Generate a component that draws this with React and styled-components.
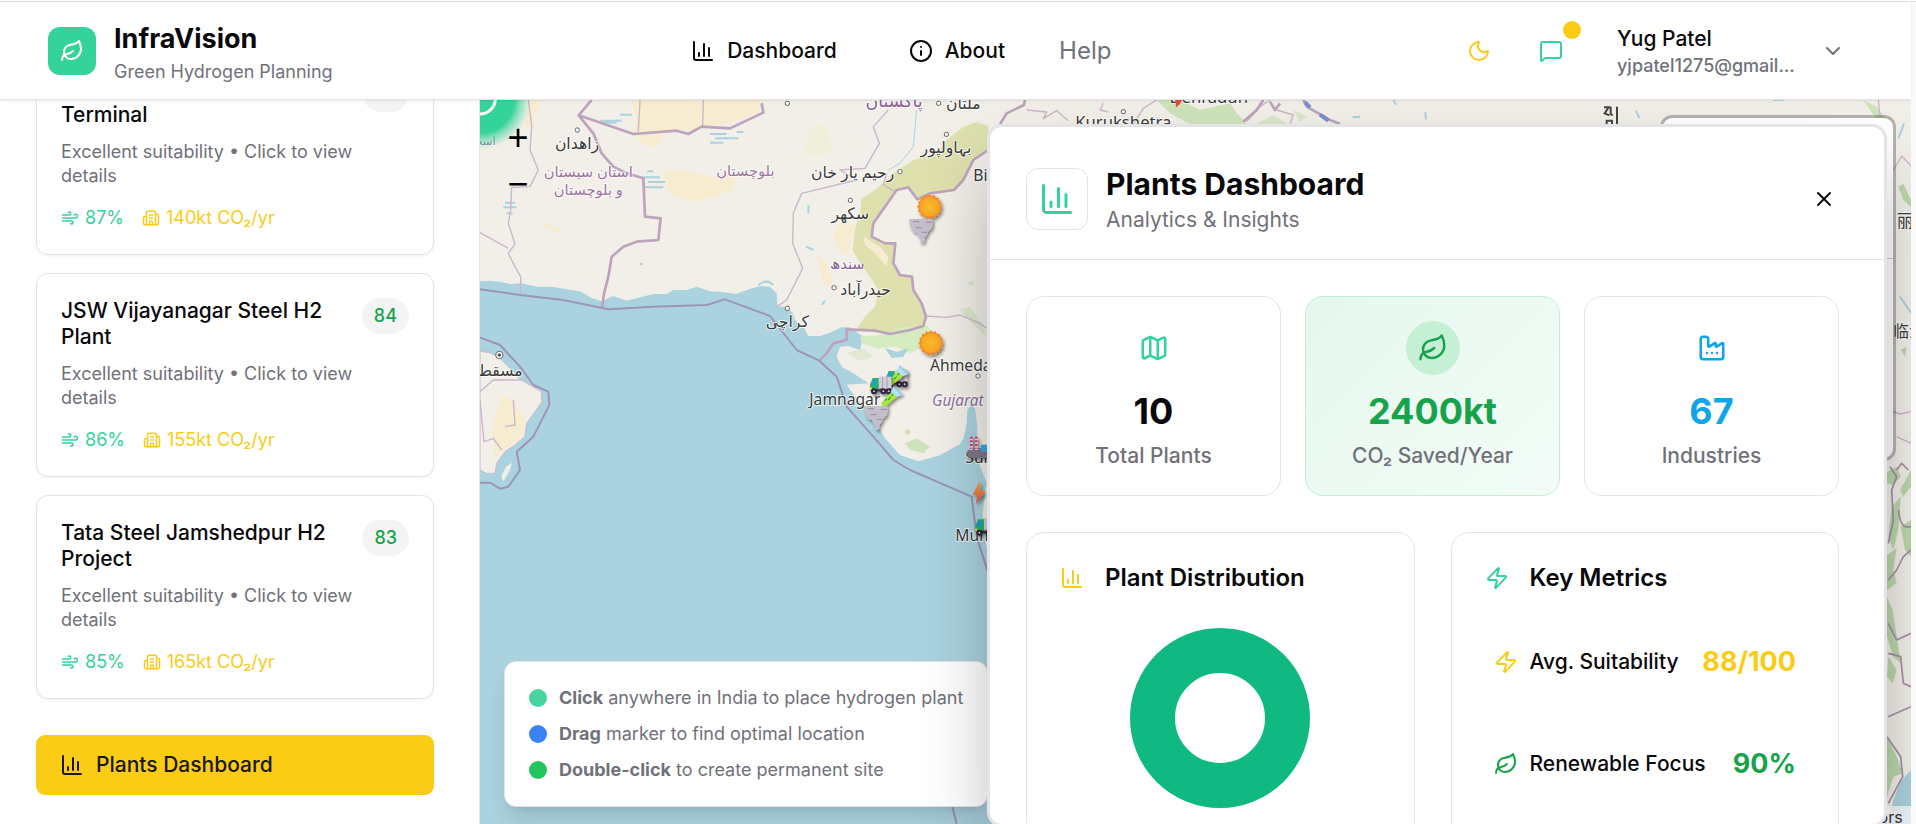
import React from "react";
import styled, { createGlobalStyle, css } from "styled-components";
import {
  Leaf,
  ChartColumn,
  Info,
  Moon,
  MessageSquare,
  ChevronDown,
  Wind,
  Building2,
  X,
  Map as MapIcon,
  Factory,
  Zap,
} from "lucide-react";

const c = {
  text: "#09090b",
  muted: "#71717a",
  border: "#e4e4e7",
  mint: "#34d399",
  yellow: "#facc15",
  green: "#16a34a",
  sky: "#0ea5e9",
};

const GlobalStyle = createGlobalStyle`
  *, *::before, *::after { box-sizing: border-box; }
  body {
    margin: 0;
    background: #fff;
    color: ${c.text};
    font-family: Inter, "Liberation Sans", sans-serif;
    font-size: 18px;
    line-height: 24px;
  }
  button { font: inherit; color: inherit; border: 0; background: none; padding: 0; cursor: pointer; }
  h1, h2, h3, p, ul, dl, dd, dt { margin: 0; padding: 0; font-weight: inherit; font-size: inherit; }
  ul { list-style: none; }
  svg { flex: none; display: block; }
`;

/* Page frame */

const Shell = styled.div`
  display: flex;
  flex-direction: column;
  height: 100vh;
  overflow: hidden;
`;

const TopRule = styled.div`
  flex: none;
  height: 2px;
  border-bottom: 1px solid #dedfe0;
`;

const Frame = styled.div`
  flex: 1;
  min-height: 0;
  display: flex;
`;

const Page = styled.div`
  flex: 1;
  min-width: 0;
  display: flex;
  flex-direction: column;
`;

const ScrollTrack = styled.div`
  flex: none;
  width: 5px;
  background: #fafafa;
`;

const Workspace = styled.div`
  flex: 1;
  min-height: 0;
  display: flex;
`;

/* Header */

const Header = styled.header`
  position: relative;
  z-index: 2;
  flex: none;
  display: flex;
  align-items: center;
  justify-content: space-between;
  height: 98px;
  padding: 0 48px;
  background: #fff;
  border-bottom: 1px solid ${c.border};
  box-shadow: 0 1px 3px rgba(0, 0, 0, 0.08);
`;

const Brand = styled.div`
  display: flex;
  align-items: center;
  gap: 18px;
`;

const Logo = styled.span`
  display: grid;
  place-items: center;
  width: 48px;
  height: 48px;
  border-radius: 12px;
  background: ${c.mint};
  color: #fff;
`;

const BrandName = styled.h1`
  font-size: 27px;
  line-height: 42px;
  font-weight: 700;
`;

const Caption = styled.p`
  color: ${c.muted};
`;

const Nav = styled.nav`
  display: flex;
  align-items: center;
  gap: 36px;
`;

const NavButton = styled.button`
  display: flex;
  align-items: center;
  gap: 12px;
  height: 54px;
  padding: 0 18px;
  font-size: 21px;
  font-weight: 500;
`;

const HelpLink = styled.a`
  color: ${c.muted};
  font-size: 24px;
  text-decoration: none;
`;

const Account = styled.div`
  display: flex;
  align-items: center;
  gap: 18px;
`;

const IconButton = styled.button`
  position: relative;
  display: grid;
  place-items: center;
  width: ${(p) => p.$size || 54}px;
  height: ${(p) => p.$size || 54}px;
  color: ${(p) => p.$color || c.text};
`;

const Badge = styled.span`
  position: absolute;
  top: -3px;
  right: -3px;
  width: 18px;
  height: 18px;
  border-radius: 50%;
  background: ${c.yellow};
`;

const UserButton = styled.button`
  display: flex;
  align-items: center;
  gap: 24px;
  padding: 0 18px 0 21px;
  text-align: left;
`;

const UserText = styled.span`
  display: flex;
  flex-direction: column;
  width: 180px;
`;

const UserName = styled.span`
  font-size: 21px;
  line-height: 30px;
  font-weight: 500;
`;

const UserMail = styled.span`
  color: ${c.muted};
  font-weight: 500;
  overflow: hidden;
  white-space: nowrap;
`;

/* Sidebar */

const Sidebar = styled.aside`
  flex: none;
  display: flex;
  flex-direction: column;
  justify-content: flex-end;
  width: 480px;
  padding: 0 45px 29px 36px;
  overflow: hidden;
  background: #fff;
  border-right: 1px solid ${c.border};
`;

const PlantList = styled.ul`
  display: flex;
  flex-direction: column;
  gap: 18px;
  margin-bottom: 36px;
`;

const PlantCard = styled.li`
  padding: 24px;
  border: 1px solid ${c.border};
  border-radius: 12px;
  background: #fff;
  box-shadow: 0 1px 3px rgba(0, 0, 0, 0.06);
`;

const PlantHead = styled.div`
  display: flex;
  align-items: flex-start;
  justify-content: space-between;
  gap: 12px;
`;

const PlantName = styled.h3`
  font-size: 21px;
  line-height: 26px;
  font-weight: 500;
`;

const Score = styled.span`
  flex: none;
  padding: 6px 12px;
  border-radius: 18px;
  background: #f4f4f5;
  color: ${c.green};
  font-weight: 500;
`;

const PlantNote = styled.p`
  margin: 12px 0 18px;
  color: ${c.muted};
`;

const PlantStats = styled.div`
  display: flex;
  gap: 18px;
`;

const PlantStat = styled.span`
  display: flex;
  align-items: center;
  gap: 6px;
  color: ${(p) => p.$color};
`;

const DashboardButton = styled.button`
  flex: none;
  display: flex;
  align-items: center;
  gap: 12px;
  height: 60px;
  padding: 0 24px;
  border-radius: 9px;
  background: ${c.yellow};
  color: #18181b;
  font-size: 21px;
  font-weight: 500;
`;

/* Map */

const MapArea = styled.main`
  position: relative;
  flex: 1;
  min-width: 0;
  overflow: hidden;
  background: #aad3df;
`;

const MapCanvas = styled.svg`
  position: absolute;
  inset: 0;
  width: 100%;
  height: 100%;
`;

const ZoomControls = styled.div`
  position: absolute;
  top: 15px;
  left: 15px;
  display: flex;
  flex-direction: column;
`;

const ZoomButton = styled.button`
  display: grid;
  place-items: center;
  width: 46px;
  height: 46px;
  font-size: 36px;
  line-height: 46px;
  color: #000;
  font-family: "Liberation Sans", Arial, sans-serif;
`;

const Legend = styled.ul`
  position: absolute;
  left: 24px;
  bottom: 17px;
  display: flex;
  flex-direction: column;
  gap: 12px;
  padding: 24px;
  border: 1px solid ${c.border};
  border-radius: 12px;
  background: #fff;
  color: ${c.muted};
  box-shadow: 0 15px 22px -4px rgba(0, 0, 0, 0.12), 0 6px 9px -6px rgba(0, 0, 0, 0.1);
`;

const LegendItem = styled.li`
  display: flex;
  align-items: center;
  gap: 12px;
  white-space: nowrap;

  &::before {
    content: "";
    width: 18px;
    height: 18px;
    border-radius: 50%;
    background: ${(p) => p.$color};
  }
`;

const LayersBox = styled.div`
  position: absolute;
  top: 15px;
  right: 15px;
  width: 236px;
  height: 346px;
  padding-top: 140px;
  border: 3px solid rgba(0, 0, 0, 0.25);
  border-radius: 12px;
  background: #fff;
  background-clip: padding-box;

  &::before {
    content: "";
    display: block;
    border-top: 1px solid #ccc;
  }
`;

/* Dashboard panel */

const Panel = styled.section`
  position: absolute;
  top: 24px;
  right: 24px;
  bottom: -3px;
  width: 900px;
  display: flex;
  flex-direction: column;
  overflow: hidden;
  border: 3px solid ${c.border};
  border-radius: 15px;
  background: #fff;
  box-shadow: 0 38px 75px -12px rgba(0, 0, 0, 0.35);
`;

const PanelHeader = styled.div`
  flex: none;
  display: flex;
  align-items: center;
  gap: 18px;
  padding: 36px 36px 24px;
  border-bottom: 1px solid ${c.border};
`;

const PanelIcon = styled.span`
  display: grid;
  place-items: center;
  width: 62px;
  height: 62px;
  border: 1px solid ${c.border};
  border-radius: 12px;
  color: ${c.mint};
`;

const PanelHeading = styled.div`
  flex: 1;
`;

const PanelTitle = styled.h2`
  font-size: 30px;
  line-height: 42px;
  font-weight: 700;
`;

const PanelSubtitle = styled.p`
  color: ${c.muted};
  font-size: 21px;
  line-height: 30px;
`;

const PanelBody = styled.div`
  display: flex;
  flex-direction: column;
  gap: 36px;
  padding: 36px 45px 36px 36px;
`;

const StatGrid = styled.div`
  display: grid;
  grid-template-columns: repeat(3, 1fr);
  gap: 24px;
`;

const StatCard = styled.div`
  display: flex;
  flex-direction: column;
  align-items: center;
  padding: 24px;
  border: 1px solid ${c.border};
  border-radius: 18px;

  ${(p) =>
    p.$highlight &&
    css`
      border-color: #c1efd1;
      background: linear-gradient(135deg, #e5f8ed, #f3fcf8);
    `}
`;

const StatIcon = styled.span`
  display: grid;
  place-items: center;
  width: 54px;
  height: 54px;
  margin-bottom: 12px;
  border-radius: 50%;
  color: ${(p) => p.$color};
  background: ${(p) => (p.$filled ? "#c5f0d6" : "transparent")};
`;

const StatValue = styled.strong`
  color: ${(p) => p.$color};
  font-size: 36px;
  line-height: 48px;
  font-weight: 700;
`;

const StatLabel = styled.span`
  margin-top: 6px;
  color: ${c.muted};
  font-size: 21px;
  line-height: 30px;
  font-weight: 500;
`;

const DetailGrid = styled.div`
  display: grid;
  grid-template-columns: repeat(2, 1fr);
  gap: 36px;
`;

const DetailCard = styled.div`
  padding: 24px;
  border: 1px solid ${c.border};
  border-radius: 18px;
`;

const DetailHead = styled.div`
  display: flex;
  align-items: center;
  gap: 12px;
  margin-bottom: 24px;
`;

const DetailIcon = styled.span`
  display: grid;
  place-items: center;
  width: 42px;
  height: 42px;
  color: ${(p) => p.$color};
`;

const DetailTitle = styled.h3`
  font-size: 24px;
  line-height: 36px;
  font-weight: 600;
`;

const Donut = styled.svg`
  width: 190px;
  height: 190px;
  margin: 0 auto;
`;

const Metrics = styled.dl`
  display: flex;
  flex-direction: column;
  gap: 24px;
`;

const Metric = styled.div`
  display: flex;
  align-items: center;
  gap: 12px;
  height: 78px;
  padding: 0 18px;
  color: ${(p) => p.$color};
`;

const MetricLabel = styled.dt`
  flex: 1;
  color: ${c.text};
  font-size: 21px;
  font-weight: 500;
  white-space: nowrap;
`;

const MetricValue = styled.dd`
  font-size: 27px;
  line-height: 36px;
  font-weight: 700;
`;

/* Map drawing: all coordinates are thirds of a pixel */

const Label = styled.text`
  font-family: "Noto Sans", "DejaVu Sans", "Noto Sans CJK SC", sans-serif;
  font-size: ${(p) => p.$size || 47}px;
  font-style: ${(p) => (p.$italic ? "italic" : "normal")};
  text-anchor: ${(p) => p.$anchor || "middle"};
  fill: ${(p) => p.$fill || "#3a3a3a"};
  stroke: #fff;
  stroke-opacity: 0.75;
  stroke-width: 6px;
  stroke-linejoin: round;
  paint-order: stroke;
`;

const Sun = ({ x, y }) => (
  <g transform={`translate(${x} ${y})`} filter="url(#drop)">
    {[0, 22, 45, 67].map((a) => (
      <rect key={a} x="-27" y="-27" width="54" height="54" fill="#f98a2b" transform={`rotate(${a})`} />
    ))}
    <circle r="30" fill="url(#sun)" />
  </g>
);

const Tornado = ({ x, y }) => (
  <g transform={`translate(${x} ${y})`} filter="url(#drop)">
    <path
      d="M-36 -34L34 -34L36 -24L34 -16L32 -6L26 0L20 4L18 14L12 20L10 26L10 34L4 38L-4 36L0 30L-6 20L-12 8L-24 4L-30 -6L-34 -18Z"
      fill="#c3becb"
    />
    <path d="M-24 -26H-6M14 -24H34M-16 -8H2M2 6H18" stroke="#958f9f" strokeWidth="3" />
  </g>
);

const Truck = ({ x, y }) => (
  <g transform={`translate(${x} ${y})`} filter="url(#drop)">
    <rect x="-6" y="-26" width="38" height="38" fill="#d3cfda" />
    <path d="M6 -26V12M19 -26V12" stroke="#a9a3b3" strokeWidth="3" />
    <path d="M-32 -2L-24 -22H-6V16H-32Z" fill="#27b36d" />
    <path d="M-28 -2L-22 -16H-14V-2Z" fill="#2b93e6" />
    <path d="M-32 6H-26V14H-32Z" fill="#ffcf3f" />
    <path d="M-18 12H32V18H-18Z" fill="#2c2140" />
    <path d="M-4 12H4M26 12H32" stroke="#e0356f" strokeWidth="6" />
    {[-20, 8, 24].map((cx) => (
      <g key={cx}>
        <circle cx={cx} cy="18" r="9" fill="#2c2140" />
        <circle cx={cx} cy="18" r="3" fill="#cfc8dc" />
      </g>
    ))}
  </g>
);

const Tube = ({ x, y }) => (
  <g transform={`translate(${x} ${y})`} filter="url(#drop)">
    <path d="M8 -24L24 -8L-12 22Q-26 28 -28 14Z" fill="#a6e83a" />
    <path d="M0 -18L8 -34L34 -10L18 -4Z" fill="#b3e2f7" />
    <path d="M8 -34L34 -10" stroke="#8ccbe9" strokeWidth="5" />
    <path d="M-18 8L-12 2M-8 6L0 -2M2 -6L8 -12" stroke="#3fa34a" strokeWidth="4" />
  </g>
);

function MapDrawing() {
  return (
    <MapCanvas viewBox="0 30 4293 2172" preserveAspectRatio="xMinYMin slice" aria-label="Map of plant sites">
      <defs>
        <radialGradient id="sun">
          <stop offset="0" stopColor="#fbbd2c" />
          <stop offset="1" stopColor="#f5a623" />
        </radialGradient>
        <radialGradient id="glow">
          <stop offset="0" stopColor="#34d399" />
          <stop offset="0.68" stopColor="#34d399" />
          <stop offset="0.8" stopColor="#34d399" stopOpacity="0.55" />
          <stop offset="1" stopColor="#34d399" stopOpacity="0" />
        </radialGradient>
        <linearGradient id="bolt" x2="0" y2="1">
          <stop offset="0" stopColor="#fbab3a" />
          <stop offset="1" stopColor="#f0503c" />
        </linearGradient>
        <filter id="drop" x="-40%" y="-40%" width="190%" height="190%">
          <feDropShadow dx="5" dy="7" stdDeviation="5" floodOpacity="0.45" />
        </filter>
      </defs>

      {/* land */}
      <path
        fill="#f2efe9"
        d="M0 0H4293V2202H1560V1500L1520 1380L1508 1270L1520 1180L1490 1100L1492 1010L1486 960L1478 940L1462 960L1460 1000L1452 1040L1440 1062L1380 1096L1315 1114L1260 1095L1215 1045L1180 985L1140 935L1112 902L1100 884L1165 880L1120 850L1085 830L1070 800L1080 770L1105 768L1140 780L1150 740L1110 712L1085 712L1050 728L1020 738L985 738L970 710L945 690L938 668L912 650L892 648L890 610L870 590L840 588L800 600L770 612L720 605L690 604L650 590L620 600L580 600L560 612L520 612L480 622L440 632L400 618L385 625L365 634L330 622L300 604L260 598L215 590L170 590L125 580L90 582L60 575L30 572L0 574Z"
      />
      <path
        fill="#f2efe9"
        stroke="#c8b8cc"
        strokeWidth="3"
        d="M0 784L30 788L60 805L90 835L120 868L150 885L184 905L186 935L165 965L140 1000L134 1040L105 1065L75 1085L50 1120L45 1150L20 1150L0 1140Z"
      />
      <path fill="#f2efe9" d="M64 1160L78 1130L96 1118L90 1140L70 1175Z" />

      {/* desert and scrub */}
      <g fill="#f7ecd0">
        <path d="M145 30H185L165 80L158 110H130Z" />
        <path d="M455 30H850L835 70L740 100L640 118L570 120L545 135L535 170L490 165L460 130L470 90Z" />
        <path d="M550 240L620 240L690 262L770 245L760 300L700 320L640 336L590 320L560 300Z" />
        <path d="M1058 440L1070 410L1105 395L1125 410L1115 450L1105 500L1080 485Z" />
        <path d="M1012 495L1035 515L1058 570L1048 590L1030 575Z" />
        <path d="M184 395L245 418L240 428L195 412Z" />
        <path d="M70 915L100 935L135 985L130 1030L100 1060L62 1090L42 1110L38 1000Z" />
      </g>
      <path fill="#eff0da" d="M985 130L1015 100L1045 118L1055 180L1030 200L970 192Z" />
      <path
        fill="#dee0ae"
        d="M1525 180L1480 210L1450 270L1422 300L1350 310L1312 328L1285 292L1250 300L1215 350L1180 400L1175 440L1215 460L1246 460L1240 520L1260 555L1296 560L1300 600L1325 640L1338 680L1330 708L1290 720L1230 732L1185 722L1130 715L1155 680L1185 650L1195 600L1170 560L1140 520L1118 480L1125 420L1140 370L1145 325L1185 300L1240 250L1300 210L1370 190L1400 150L1450 110L1490 96L1525 108Z"
      />
      <path fill="#f7ecd0" d="M1150 440L1200 470L1225 500L1220 530L1185 490L1155 465Z" />
      <path fill="#d5ecc0" d="M1140 740L1200 735L1270 712L1340 706L1358 730L1330 770L1290 790L1250 770L1190 775L1145 760Z" />
      <path fill="#aad3df" d="M1215 775L1250 785L1285 775L1270 800L1235 804Z" />
      <g fill="#cfe3bb">
        <path d="M1275 1060L1310 1045L1350 1070L1330 1090L1290 1080Z" />
        <circle cx="1283" cy="1026" r="8" />
        <path d="M1100 790L1150 775L1180 800L1140 812Z" opacity="0.5" />
        <path d="M1460 580L1480 570L1482 590ZM1440 660L1470 650L1500 690L1520 740L1485 710Z" opacity="0.6" />
        <path d="M2030 30L2070 70L2130 102H2300L2270 70L2250 40L2160 60L2100 30Z" />
        <path d="M2330 102L2380 75L2420 102ZM2440 60L2480 80L2460 95Z" opacity="0.7" />
        <path d="M4150 30L4190 90L4230 102L4190 50Z" />
      </g>

      {/* inland water */}
      <g stroke="#aad3df" strokeWidth="6" fill="none">
        <path d="M360 92H425M370 98H410M420 74H455M690 132H740M705 145H775M690 158H730M770 126H790M490 262H540M505 276H555M495 292H550M75 338H105M70 352H110M80 370H98M502 244H520" />
        <path d="M985 345V370M978 470L1000 480M1025 645L1035 632M480 522H488" />
        <path d="M1310 60L1300 170L1260 220L1225 240" strokeWidth="3" />
        <path d="M835 585Q860 565 880 585" />
        <path d="M2740 30L2748 44M2836 66L2838 88M2618 82L2640 80M4272 100L4255 145M3468 62L3478 84M3880 30H3910M4260 620L4293 668" />
      </g>

      {/* borders */}
      <g fill="none" stroke="#cbb5cb" strokeWidth="4" strokeLinejoin="round">
        <path d="M145 30L155 110L150 180L175 240L150 290L95 292L92 360L85 400L105 462L85 490L105 530L122 560V612" />
        <path d="M0 428L40 450L85 475" />
        <path d="M480 30L475 125M670 30L668 110" />
        <path d="M1225 60L1180 110L1198 160L1155 235L1080 240L1130 270L965 310L940 370L938 460L968 535L920 630L888 652" />
        <path d="M1220 250L1210 285L1245 305M1338 678L1400 682L1440 675L1500 700L1520 715" />
        <path d="M0 905L40 870L125 870M0 930L12 1055L40 1045L65 1080M75 1010L105 1005L100 930" />
        <path d="M1640 60L1700 66L1690 86L1730 62L1765 92M1870 40L1860 60L1885 66M1960 102L1990 55L2030 30M2300 95L2340 50L2370 30M2390 60L2440 75L2430 102" />
        <path d="M4195 30L4200 80M4240 240L4265 198L4293 228M4222 960L4260 972L4293 965M4250 1040L4293 1060" />
      </g>
      <g fill="none" stroke="#bda3bb" strokeWidth="8" strokeLinejoin="round">
        <path d="M335 30L296 76L340 130L365 190L400 230L440 250L490 265L495 380L542 385L535 450L470 455L430 470L395 500L385 560L372 610L366 655" />
        <path d="M296 76L460 132L590 122L625 132L665 110L750 115L850 68L845 40" />
        <path d="M1525 180L1480 210L1450 270L1422 300L1350 310L1312 328L1285 292L1250 300L1215 350L1180 400L1175 440L1215 460L1246 460L1240 520L1260 555L1296 560L1300 600L1325 640L1338 680L1330 708L1290 720L1230 732L1185 722L1100 718V750L1060 760L1040 790L1018 812" />
        <path d="M1560 102L1580 70L1632 45L1635 30M2290 95L2330 60L2350 30M2370 35L2385 60L2400 40M2470 30L2480 50L2550 90L2580 102" />
      </g>
      <g fill="none" stroke="#9d94b8" strokeWidth="6" strokeLinejoin="round">
        <path d="M0 598L120 615L250 630L385 658L520 650L680 645L735 628L870 678L950 780L1018 812L1070 860L1100 950L1180 1040L1240 1110L1290 1140L1475 1220L1490 1340L1525 1450" />
        <path d="M0 742L60 765L120 830L160 885L205 905L208 945L160 1040L110 1085L120 1140L85 1190L60 1196L30 1178L0 1178" />
        <path d="M1412 2130L1430 2202" />
      </g>
      <path d="M2475 36L2490 52M2520 74L2545 92" stroke="#7a8fd0" strokeWidth="12" />

      {/* eastern edge: forest and gulf */}
      <g fill="#bcd8ac">
        <path d="M4255 290L4270 282L4293 330V350L4270 330Z" />
        <path d="M4262 780L4280 770L4275 800Z" />
        <path d="M4221 1145L4250 1130L4262 1160L4240 1185L4221 1180ZM4260 1200L4293 1140V1190L4270 1220ZM4235 1250L4262 1220L4255 1320L4240 1380L4225 1340ZM4262 1310L4293 1290V1370L4270 1350Z" />
        <path d="M4221 1395L4250 1375L4240 1440L4250 1480L4221 1500ZM4262 1310L4293 1330V1400L4275 1380Z" />
        <path d="M4221 1520L4238 1560L4262 1720L4240 1700L4221 1640Z" />
        <path d="M4225 1700L4250 1740L4238 1780L4221 1760ZM4221 1940L4250 2000L4268 2050L4240 2060L4221 2120Z" />
      </g>
      <path fill="#aad3df" d="M4293 2040L4262 2075L4240 2130L4225 2202H4293Z" />
      <g fill="none" stroke="#a58fa8" strokeWidth="5" strokeLinejoin="round">
        <path d="M4230 1130L4250 1160L4235 1200L4240 1290L4225 1360M4250 1140L4265 1120L4285 1140" />
        <path d="M4256 1260Q4260 1320 4293 1310M4225 1470L4250 1440L4270 1400L4293 1380" />
        <path d="M4225 1600L4250 1650L4293 1630M4225 1690L4262 1700L4270 1780L4293 1790M4225 1880L4293 1850" />
        <path d="M4221 1940L4262 2000L4268 2060L4225 2140" />
      </g>

      {/* towns */}
      <g fill="#fff" stroke="#666" strokeWidth="3">
        <rect x="286" y="114" width="12" height="12" rx="4" />
        <rect x="916" y="34" width="12" height="12" rx="4" />
        <rect x="1370" y="34" width="12" height="12" rx="4" />
        <rect x="1393" y="127" width="12" height="12" rx="4" />
        <rect x="1254" y="239" width="12" height="12" rx="4" />
        <rect x="1105" y="325" width="12" height="12" rx="4" />
        <rect x="1056" y="587" width="12" height="12" rx="4" />
        <rect x="916" y="649" width="12" height="12" rx="4" />
        <rect x="1488" y="852" width="12" height="12" rx="4" />
        <rect x="1924" y="59" width="12" height="12" rx="4" />
        <circle cx="58" cy="795" r="11" />
        <circle cx="58" cy="795" r="4" fill="#444" />
      </g>
      <Label x="291" y="178">زاهدان</Label>
      <Label x="325" y="260" $fill="#9c74a0" $size={44}>استان سیستان</Label>
      <Label x="325" y="314" $fill="#9c74a0" $size={44}>و بلوچستان</Label>
      <Label x="796" y="258" $fill="#9c74a0" $size={44}>بلوچستان</Label>
      <Label x="1242" y="52" $fill="#8d5f96" $size={52}>پاکستان</Label>
      <Label x="1450" y="56">ملتان</Label>
      <Label x="1398" y="190">بہاولپور</Label>
      <Label x="1118" y="264">رحیم یار خان</Label>
      <Label x="1111" y="386">سکھر</Label>
      <Label x="1102" y="536" $fill="#8d5f96" $size={44}>سندھ</Label>
      <Label x="1157" y="614">حیدرآباد</Label>
      <Label x="922" y="710">کراچی</Label>
      <Label x="60" y="858">مسقط</Label>
      <Label x="10" y="166" $fill="#9c74a0" $size={36}>است</Label>
      <Label x="1480" y="274" $anchor="start">Bi</Label>
      <Label x="1350" y="842" $anchor="start">Ahmedabad</Label>
      <Label x="988" y="944" $anchor="start">Jamnagar</Label>
      <Label x="1356" y="948" $anchor="start" $italic $fill="#8f7098" $size={46}>Gujarat</Label>
      <Label x="1456" y="1118" $anchor="start">Surat</Label>
      <Label x="1426" y="1353" $anchor="start">Mumbai</Label>
      <Label x="1930" y="114" $size={50}>Kurukshetra</Label>
      <Label x="2186" y="40" $size={50}>Dehradun</Label>
      <Label x="4250" y="410" $anchor="start" $size={50}>丽江</Label>
      <Label x="4240" y="742" $anchor="start">临沧</Label>
      <g fill="none" stroke="#444" strokeWidth="6">
        <path d="M3372 52H3386L3374 70L3388 76M3392 50V72L3398 76M3411 50V102M3380 102V92H3396V102" />
      </g>
      <path d="M2086 30H2106L2100 42L2088 52Z" fill="#ea4a3c" />

      {/* markers */}
      <Sun x={1349} y={350} />
      <Tornado x={1323} y={421} />
      <Sun x={1353} y={759} />
      <Truck x={1250} y={865} />
      <Tube x={1250} y={862} />
      <Truck x={1202} y={886} />
      <Tube x={1232} y={924} />
      <Tornado x={1188} y={982} />
      <g filter="url(#drop)">
        <path d="M1460 1084L1475 1074H1540V1104H1464Z" fill="#7d7788" />
        <path d="M1470 1040H1478V1080H1470ZM1485 1040H1494V1080H1485Z" fill="#e2dce8" />
        <path d="M1474 1040V1076M1489 1040V1076" stroke="#e0356f" strokeWidth="8" strokeDasharray="6 5" />
        <rect x="1503" y="1064" width="30" height="22" fill="#38a5e8" />
      </g>
      <path d="M1500 1172L1478 1214H1492L1488 1242L1516 1204H1502Z" fill="url(#bolt)" filter="url(#drop)" />
      <Truck x={1518} y={1310} />

      {/* sidebar toggle */}
      <circle cx="0" cy="26" r="152" fill="url(#glow)" />
      <circle cx="0" cy="26" r="46" fill="none" stroke="#fff" strokeWidth="9" />

      {/* attribution */}
      <rect x="3600" y="2148" width="693" height="54" fill="#fff" fillOpacity="0.8" />
      <text x="4268" y="2200" fontSize="48" fill="#333" textAnchor="end" fontFamily="Inter, sans-serif">
        contributors
      </text>
    </MapCanvas>
  );
}

const plants = [
  { name: "Mundra Port Green H2 Terminal", score: 85, wind: "87%", co2: "140kt CO₂/yr" },
  { name: "JSW Vijayanagar Steel H2 Plant", score: 84, wind: "86%", co2: "155kt CO₂/yr" },
  { name: "Tata Steel Jamshedpur H2 Project", score: 83, wind: "85%", co2: "165kt CO₂/yr" },
];

const stats = [
  { icon: MapIcon, color: c.mint, value: "10", valueColor: c.text, label: "Total Plants" },
  { icon: Leaf, color: c.green, value: "2400kt", valueColor: c.green, label: "CO₂ Saved/Year", highlight: true },
  { icon: Factory, color: c.sky, value: "67", valueColor: c.sky, label: "Industries" },
];

const metrics = [
  { icon: Zap, color: c.yellow, label: "Avg. Suitability", value: "88/100" },
  { icon: Leaf, color: c.green, label: "Renewable Focus", value: "90%" },
];

export default function App() {
  return (
    <Shell>
      <GlobalStyle />
      <TopRule />
      <Frame>
        <Page>
          <Header>
            <Brand>
              <Logo>
                <Leaf size={24} />
              </Logo>
              <div>
                <BrandName>InfraVision</BrandName>
                <Caption>Green Hydrogen Planning</Caption>
              </div>
            </Brand>
            <Nav>
              <NavButton type="button">
                <ChartColumn size={24} />
                Dashboard
              </NavButton>
              <NavButton type="button">
                <Info size={24} />
                About
              </NavButton>
              <HelpLink href="#help">Help</HelpLink>
            </Nav>
            <Account>
              <IconButton type="button" $color={c.yellow} aria-label="Toggle theme">
                <Moon size={24} />
              </IconButton>
              <IconButton type="button" $color={c.mint} aria-label="Messages">
                <MessageSquare size={24} />
                <Badge />
              </IconButton>
              <UserButton type="button">
                <UserText>
                  <UserName>Yug Patel</UserName>
                  <UserMail>yjpatel1275@gmail...</UserMail>
                </UserText>
                <ChevronDown size={24} color={c.muted} />
              </UserButton>
            </Account>
          </Header>
          <Workspace>
            <Sidebar>
              <PlantList>
                {plants.map((p) => (
                  <PlantCard key={p.name}>
                    <PlantHead>
                      <PlantName>{p.name}</PlantName>
                      <Score>{p.score}</Score>
                    </PlantHead>
                    <PlantNote>Excellent suitability • Click to view details</PlantNote>
                    <PlantStats>
                      <PlantStat $color={c.mint}>
                        <Wind size={18} />
                        {p.wind}
                      </PlantStat>
                      <PlantStat $color={c.yellow}>
                        <Building2 size={18} />
                        {p.co2}
                      </PlantStat>
                    </PlantStats>
                  </PlantCard>
                ))}
              </PlantList>
              <DashboardButton type="button">
                <ChartColumn size={24} />
                Plants Dashboard
              </DashboardButton>
            </Sidebar>
            <MapArea>
              <MapDrawing />
              <ZoomControls>
                <ZoomButton type="button" aria-label="Zoom in">+</ZoomButton>
                <ZoomButton type="button" aria-label="Zoom out">−</ZoomButton>
              </ZoomControls>
              <Legend>
                <LegendItem $color="#45d6a0">
                  <span><strong>Click</strong> anywhere in India to place hydrogen plant</span>
                </LegendItem>
                <LegendItem $color="#3b82f6">
                  <span><strong>Drag</strong> marker to find optimal location</span>
                </LegendItem>
                <LegendItem $color="#22c55e">
                  <span><strong>Double-click</strong> to create permanent site</span>
                </LegendItem>
              </Legend>
              <LayersBox />
              <Panel>
                <PanelHeader>
                  <PanelIcon>
                    <ChartColumn size={36} />
                  </PanelIcon>
                  <PanelHeading>
                    <PanelTitle>Plants Dashboard</PanelTitle>
                    <PanelSubtitle>Analytics &amp; Insights</PanelSubtitle>
                  </PanelHeading>
                  <IconButton type="button" $size={48} aria-label="Close">
                    <X size={24} />
                  </IconButton>
                </PanelHeader>
                <PanelBody>
                  <StatGrid>
                    {stats.map(({ icon: Icon, ...s }) => (
                      <StatCard key={s.label} $highlight={s.highlight}>
                        <StatIcon $color={s.color} $filled={s.highlight}>
                          <Icon size={30} />
                        </StatIcon>
                        <StatValue $color={s.valueColor}>{s.value}</StatValue>
                        <StatLabel>{s.label}</StatLabel>
                      </StatCard>
                    ))}
                  </StatGrid>
                  <DetailGrid>
                    <DetailCard>
                      <DetailHead>
                        <DetailIcon $color={c.yellow}>
                          <ChartColumn size={24} />
                        </DetailIcon>
                        <DetailTitle>Plant Distribution</DetailTitle>
                      </DetailHead>
                      <Donut viewBox="0 0 190 190" role="img" aria-label="Plant distribution chart">
                        <circle cx="95" cy="95" r="67.5" fill="none" stroke="#10b981" strokeWidth="45" />
                      </Donut>
                    </DetailCard>
                    <DetailCard>
                      <DetailHead>
                        <DetailIcon $color={c.mint}>
                          <Zap size={24} />
                        </DetailIcon>
                        <DetailTitle>Key Metrics</DetailTitle>
                      </DetailHead>
                      <Metrics>
                        {metrics.map(({ icon: Icon, ...m }) => (
                          <Metric key={m.label} $color={m.color}>
                            <Icon size={24} />
                            <MetricLabel>{m.label}</MetricLabel>
                            <MetricValue>{m.value}</MetricValue>
                          </Metric>
                        ))}
                      </Metrics>
                    </DetailCard>
                  </DetailGrid>
                </PanelBody>
              </Panel>
            </MapArea>
          </Workspace>
        </Page>
        <ScrollTrack />
      </Frame>
    </Shell>
  );
}
